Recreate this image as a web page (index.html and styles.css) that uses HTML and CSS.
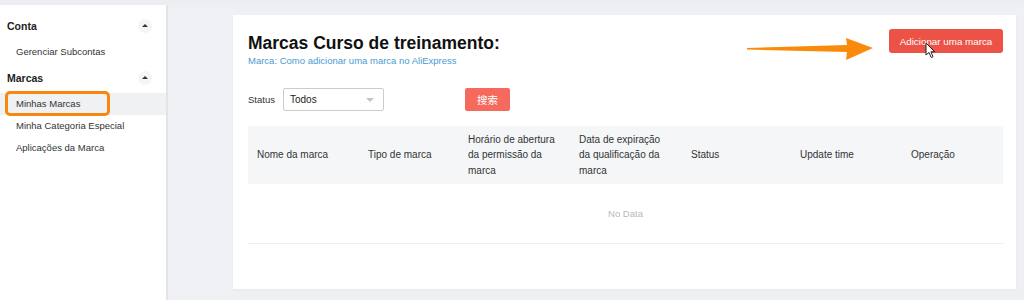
FILE: index.html
```html
<!DOCTYPE html>
<html lang="pt">
<head>
    <meta charset="UTF-8">
    <title>Minhas Marcas</title>
    <link rel="stylesheet" href="styles.css">
</head>
<body>
    <div class="top-strip"></div>
    <div class="layout">
        <aside class="sidebar">
            <div class="group">
                <div class="group-title">Conta <span class="caret"></span></div>
                <div class="nav-item">Gerenciar Subcontas</div>
            </div>
            <div class="group">
                <div class="group-title">Marcas <span class="caret"></span></div>
                <div class="nav-item active">Minhas Marcas<span class="highlight"></span></div>
                <div class="nav-item">Minha Categoria Especial</div>
                <div class="nav-item">Aplicações da Marca</div>
            </div>
        </aside>

        <main class="main">
            <div class="card">
                <div class="card-head">
                    <div>
                        <h1>Marcas Curso de treinamento:</h1>
                        <a class="help-link">Marca: Como adicionar uma marca no AliExpress</a>
                    </div>
                    <button class="btn-add">Adicionar uma marca</button>
                </div>

                <div class="filters">
                    <label class="filter-label">Status</label>
                    <div class="select">Todos <span class="select-caret"></span></div>
                    <button class="btn-search">搜索</button>
                </div>

                <div class="table">
                    <div class="thead">
                        <div class="th">Nome da marca</div>
                        <div class="th">Tipo de marca</div>
                        <div class="th">Horário de abertura da permissão da marca</div>
                        <div class="th">Data de expiração da qualificação da marca</div>
                        <div class="th">Status</div>
                        <div class="th">Update time</div>
                        <div class="th">Operação</div>
                    </div>
                    <div class="empty">No Data</div>
                </div>

                <!-- annotation overlays -->
                <svg class="arrow" width="130" height="26" viewBox="0 0 130 26">
                    <polygon points="0,11 100,8 99,1 126,11 99,23 100,15 0,12.5" fill="#f98a0c"/>
                </svg>
                <svg class="cursor" width="12" height="17" viewBox="0 0 12 17">
                    <path d="M1 1 L1 13 L4 10.5 L6.2 15.5 L8 14.7 L5.9 9.8 L9.8 9.8 Z" fill="#fff" stroke="#222" stroke-width="1"/>
                </svg>
            </div>
        </main>
    </div>
</body>
</html>
```

FILE: styles.css
```css
body {
    margin: 0;
    font-family: "Liberation Sans", Arial, sans-serif;
    color: #333;
    background: #eff0f3;
    height: 300px;
    overflow: hidden;
}
.top-strip {
    height: 5px;
    background: #eceef1;
}
.layout {
    display: flex;
    height: 295px;
}
.sidebar {
    width: 166px;
    flex-shrink: 0;
    background: #fff;
    border-right: 2px solid #e2e4e8;
    padding-top: 10px;
}
.group {
    margin-bottom: 4px;
}
.group-title {
    display: flex;
    justify-content: space-between;
    align-items: center;
    height: 22px;
    padding: 0 14px 0 7px;
    font-size: 10.5px;
    font-weight: bold;
    color: #222;
    margin-bottom: 4px;
}
.caret {
    width: 14px;
    height: 14px;
    border-radius: 50%;
    background: #f4f5f7;
    position: relative;
}
.caret::after {
    content: "";
    position: absolute;
    left: 4px;
    top: 5px;
    border-left: 3px solid transparent;
    border-right: 3px solid transparent;
    border-bottom: 3px solid #333;
}
.nav-item {
    position: relative;
    height: 22px;
    line-height: 22px;
    padding-left: 16px;
    font-size: 9.5px;
    color: #333;
}
.nav-item.active {
    background: #f0f1f3;
}
.highlight {
    position: absolute;
    left: 5px;
    top: -2px;
    width: 99px;
    height: 19px;
    border: 3px solid #f7870f;
    border-radius: 5px;
}
.main {
    flex: 1;
    padding: 10px 8px 0 65px;
}
.card {
    position: relative;
    background: #fff;
    height: 274px;
    padding: 0 13px 0 15px;
    box-shadow: 0 1px 2px rgba(0, 0, 0, 0.04);
}
.card-head {
    display: flex;
    justify-content: space-between;
    align-items: flex-start;
}
h1 {
    margin: 16px 0 0;
    font-size: 17.5px;
    line-height: 24px;
    color: #111;
}
.help-link {
    display: block;
    font-size: 9.5px;
    line-height: 12px;
    color: #4a9bd1;
}
.btn-add {
    margin-top: 14px;
    width: 114px;
    height: 24px;
    background: #ec5246;
    border: none;
    border-radius: 3px;
    color: #fff;
    font-family: "Liberation Sans", Arial, sans-serif;
    font-size: 9.8px;
    padding: 0;
}
.filters {
    display: flex;
    align-items: center;
    margin-top: 21px;
    height: 23px;
}
.filter-label {
    width: 35px;
    font-size: 9.5px;
}
.select {
    width: 93px;
    height: 21px;
    line-height: 21px;
    border: 1px solid #ccc;
    border-radius: 2px;
    padding-left: 6px;
    font-size: 10px;
    color: #222;
    position: relative;
}
.select-caret {
    position: absolute;
    right: 9px;
    top: 9px;
    border-left: 4px solid transparent;
    border-right: 4px solid transparent;
    border-top: 4px solid #c3c3c3;
}
.btn-search {
    margin-left: 81px;
    width: 45px;
    height: 23px;
    background: #f56a5c;
    border: none;
    border-radius: 2px;
    color: #fff;
    font-family: "Noto Sans CJK SC", sans-serif;
    font-size: 10.5px;
    padding: 0;
}
.table {
    margin-top: 15px;
}
.thead {
    display: grid;
    grid-template-columns: 111px 100px 111px 112px 109px 111px 101px;
    align-items: center;
    height: 58px;
    background: #f5f6f8;
}
.th {
    padding: 0 8px 0 9px;
    font-size: 10px;
    line-height: 15.5px;
    color: #333;
}
.empty {
    height: 59px;
    line-height: 59px;
    text-align: center;
    font-size: 9.5px;
    color: #b8b8b8;
    border-bottom: 1px solid #eeeff1;
}
.arrow {
    position: absolute;
    left: 514px;
    top: 22px;
}
.cursor {
    position: absolute;
    left: 692px;
    top: 27px;
}
```
